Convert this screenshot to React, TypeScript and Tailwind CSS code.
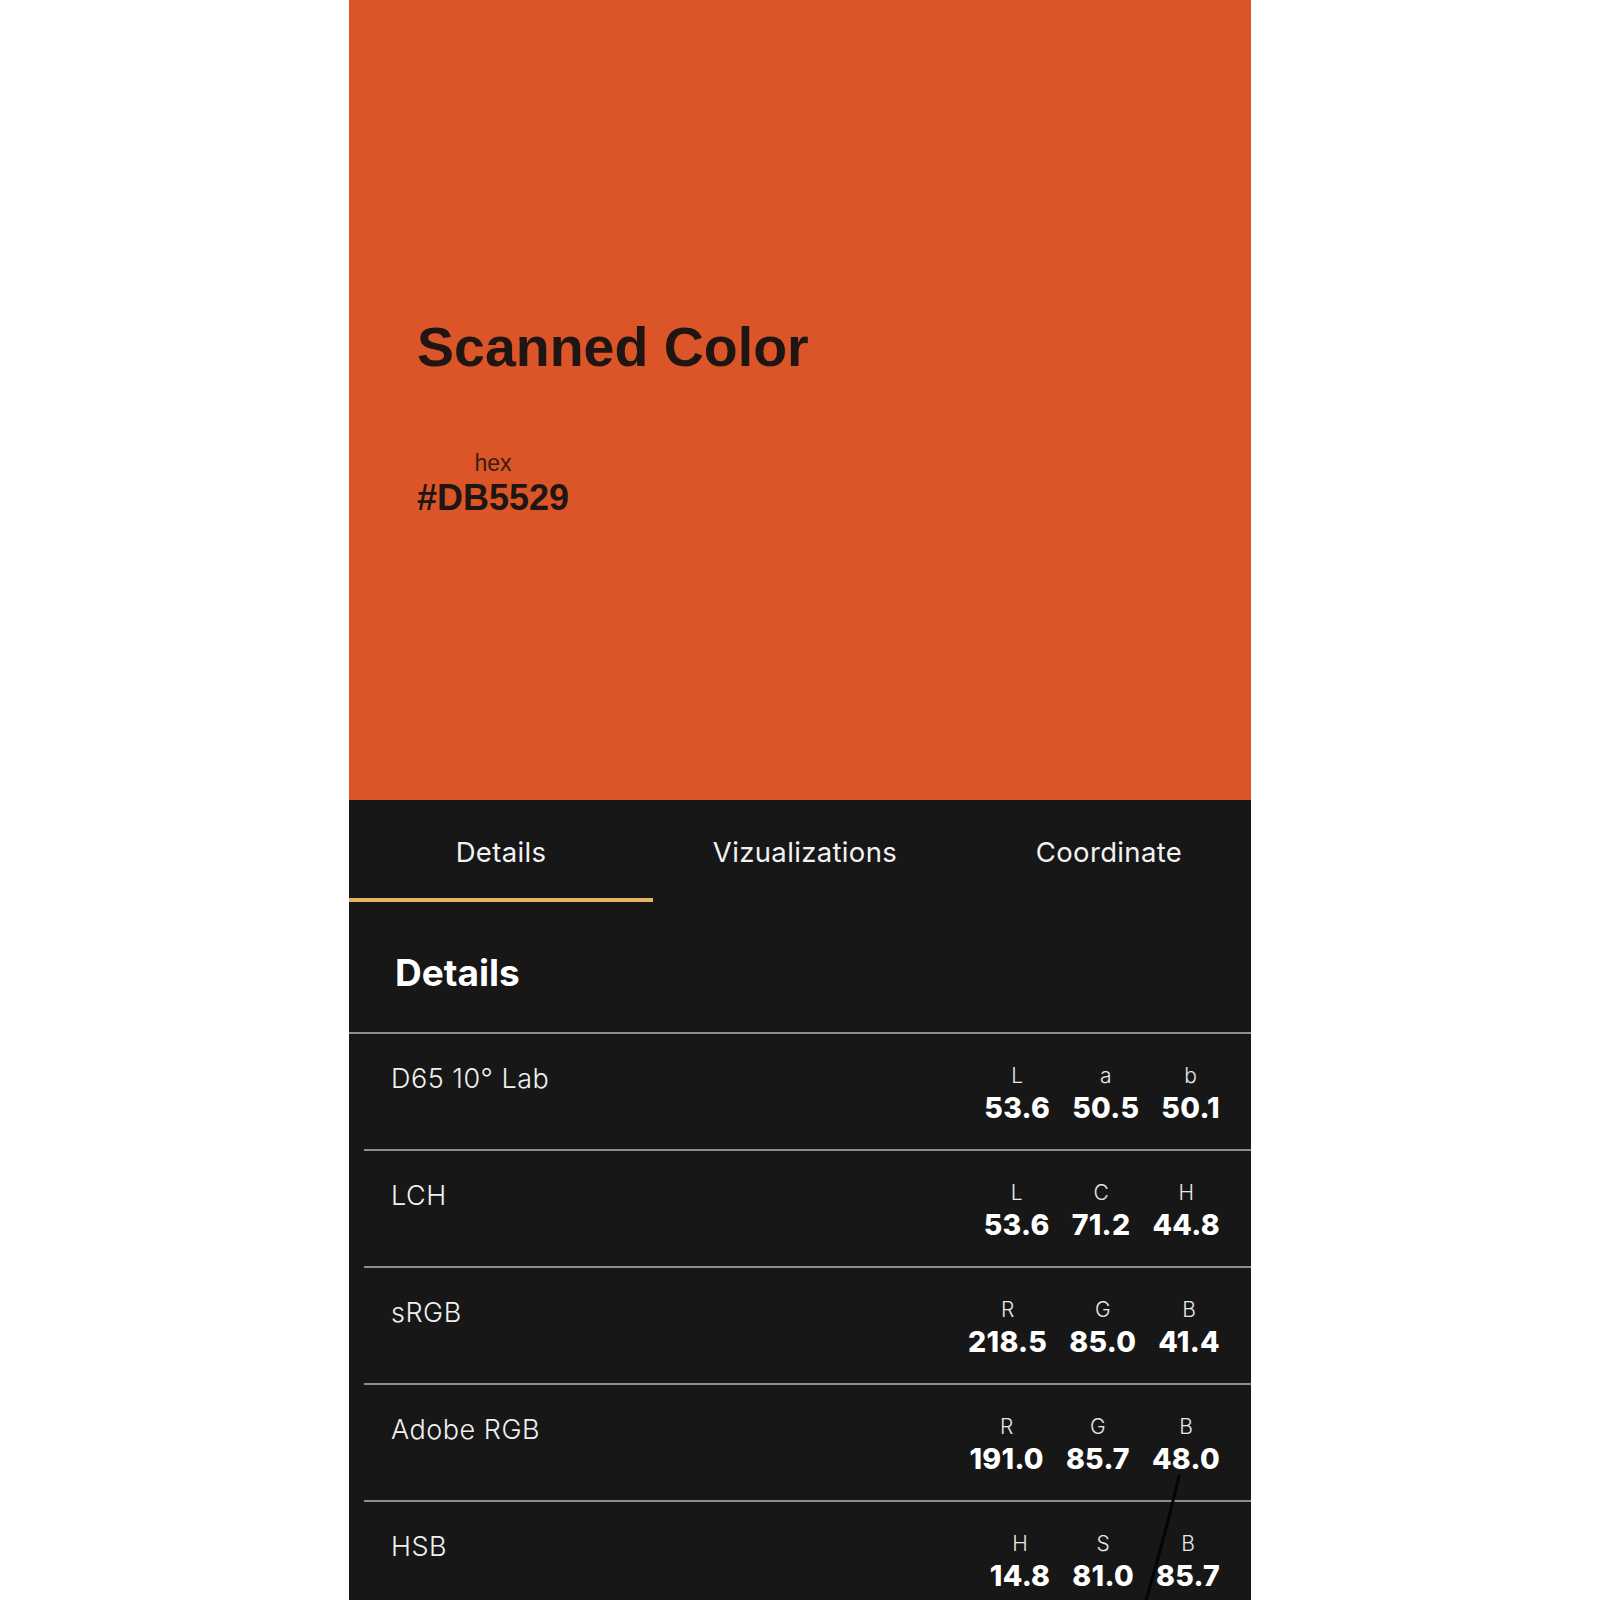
import React from 'react';

type Row = {
  name: string;
  parts: { key: string; value: string }[];
};

const rows: Row[] = [
  { name: 'D65 10° Lab', parts: [{ key: 'L', value: '53.6' }, { key: 'a', value: '50.5' }, { key: 'b', value: '50.1' }] },
  { name: 'LCH', parts: [{ key: 'L', value: '53.6' }, { key: 'C', value: '71.2' }, { key: 'H', value: '44.8' }] },
  { name: 'sRGB', parts: [{ key: 'R', value: '218.5' }, { key: 'G', value: '85.0' }, { key: 'B', value: '41.4' }] },
  { name: 'Adobe RGB', parts: [{ key: 'R', value: '191.0' }, { key: 'G', value: '85.7' }, { key: 'B', value: '48.0' }] },
  { name: 'HSB', parts: [{ key: 'H', value: '14.8' }, { key: 'S', value: '81.0' }, { key: 'B', value: '85.7' }] },
];

const tabs = ['Details', 'Vizualizations', 'Coordinate'];

const sans = { fontFamily: 'Inter, "Noto Sans", sans-serif' };
const helv = { fontFamily: '"Liberation Sans", Arial, sans-serif' };

export default function App() {
  return (
    <div className="relative h-[1600px] overflow-hidden bg-white">
      <div className="mx-auto flex h-full w-[902px] flex-col" style={sans}>
        {/* Swatch */}
        <div className="h-[800px] shrink-0 bg-[#db5529] pl-[68px] pt-[320px]" style={helv}>
          <h1 className="text-[55.5px] font-bold leading-none text-[#1f1512]">Scanned Color</h1>
          <div className="mt-[76px] inline-flex flex-col items-center">
            <span className="text-[23px] leading-none text-[#3a1c12]">hex</span>
            <span className="mt-[5px] text-[36px] font-bold leading-none text-[#1f1512]">#DB5529</span>
          </div>
        </div>

        {/* Panel */}
        <div className="flex-1 bg-[#171717] text-[#f2f2f2]">
          <div className="flex h-[102px] overflow-hidden">
            {tabs.map((t, i) => (
              <div
                key={t}
                className={`w-[304px] shrink-0 border-b-4 pt-[36px] text-center text-[27.5px] leading-[32px] tracking-[0.35px] ${
                  i === 0 ? 'border-[#e3b463]' : 'border-transparent'
                }`}
              >
                {t}
              </div>
            ))}
          </div>

          <div className="pb-[37px] pl-[46px] pt-[49px]">
            <h2 className="text-[37px] font-bold leading-[44px] text-white">Details</h2>
          </div>
          <div className="h-[2px] bg-[#8e8e8e]" />

          {rows.map((r) => (
            <div key={r.name} className="ml-[15px] flex h-[117px] justify-between border-b-2 border-[#8e8e8e] pr-[31px] pt-[29px]">
              <div className="pl-[27px] text-[27px] font-light leading-[32px] tracking-[0.5px] text-[#f0f0f0]">{r.name}</div>
              <div className="mt-[1px] flex gap-[22px]">
                {r.parts.map((p) => (
                  <div key={p.key} className="flex flex-col items-center">
                    <span className="text-[21px] font-light leading-[24px] text-[#e8e8e8]">{p.key}</span>
                    <span className="mt-[4px] text-[28.5px] font-extrabold leading-[32px] tracking-[0.3px] text-white">{p.value}</span>
                  </div>
                ))}
              </div>
            </div>
          ))}
        </div>
      </div>

      {/* pen stroke over the screen */}
      <svg className="pointer-events-none absolute left-0 top-0" width="1600" height="1600">
        <path d="M1179 1476 Q1166 1532 1146 1600" stroke="#050505" strokeWidth="3" fill="none" strokeLinecap="round" />
      </svg>
    </div>
  );
}
